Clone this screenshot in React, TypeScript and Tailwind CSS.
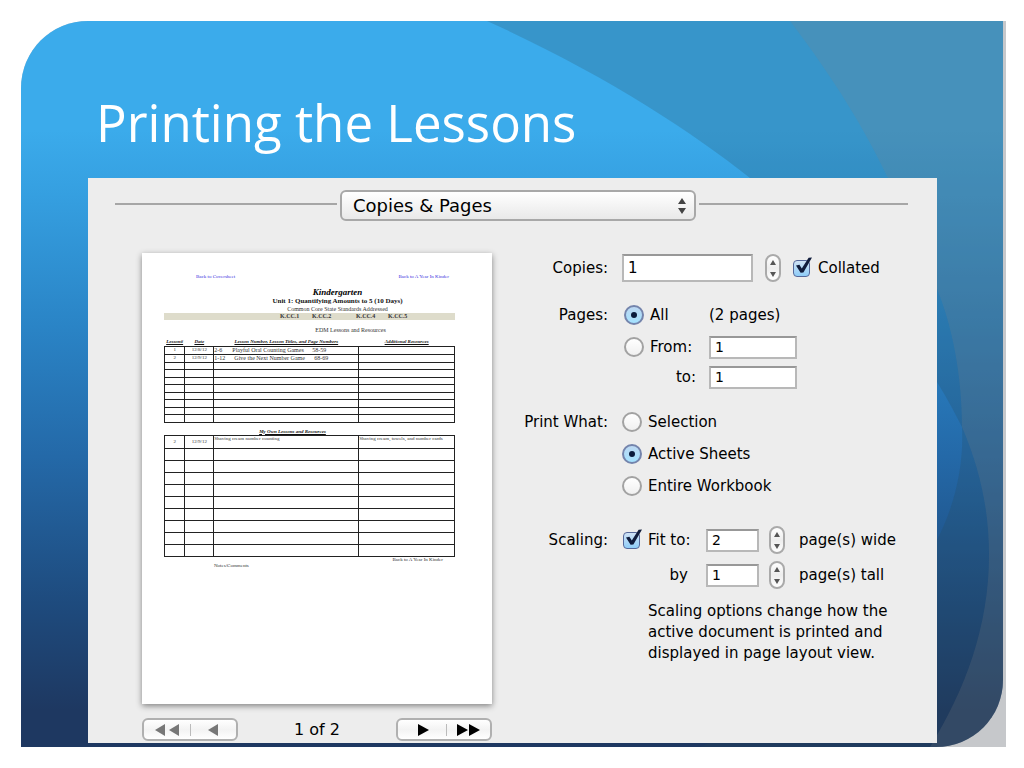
import { useId, useState } from "react";
import type { ReactNode } from "react";

function Backdrop() {
  return (
    <svg
      className="absolute inset-0 h-full w-full"
      viewBox="21 21 982 726"
      preserveAspectRatio="none"
      aria-hidden="true"
    >
      <defs>
        <linearGradient id="sky" x1="0" y1="0" x2="0" y2="1">
          <stop offset="0" stopColor="#3babeb" />
          <stop offset="0.15" stopColor="#3babeb" />
          <stop offset="0.24" stopColor="#359fe0" />
          <stop offset="0.42" stopColor="#2a84c6" />
          <stop offset="0.6" stopColor="#2469a8" />
          <stop offset="0.8" stopColor="#1e4b7e" />
          <stop offset="0.95" stopColor="#1e3861" />
          <stop offset="1" stopColor="#1e3861" />
        </linearGradient>
      </defs>
      <rect x="21" y="21" width="982" height="726" fill="url(#sky)" />
      <path
        d="M487 21 C600 72 690 130 750 178 C850 258 925 350 962 427 C964 465 955 505 937 540 C890 630 800 700 700 747 L1003 747 L1003 21 Z"
        fill="#2a4a58"
        fillOpacity="0.22"
      />
      <path
        d="M790 21 C835 80 865 130 888 178 C910 215 925 250 937 289 C952 325 962 375 962 427 C980 469 989 510 989 555 C989 627 965 690 930 747 L1003 747 L1003 21 Z"
        fill="#808080"
        fillOpacity="0.2"
      />
    </svg>
  );
}

function Stepper({ label, onStep }: { label: string; onStep: (by: number) => void }) {
  return (
    <span className="flex h-7 w-4 shrink-0 flex-col overflow-hidden rounded-full border-2 border-[#aaaaaa] bg-gradient-to-b from-white via-[#ededed] to-white">
      <button
        type="button"
        aria-label={`Increase ${label}`}
        onClick={() => onStep(1)}
        className="flex flex-1 items-center justify-center"
      >
        <svg width="6" height="5" viewBox="0 0 6 5" aria-hidden="true">
          <path d="M3 0 L6 5 H0 Z" fill="#555" />
        </svg>
      </button>
      <button
        type="button"
        aria-label={`Decrease ${label}`}
        onClick={() => onStep(-1)}
        className="flex flex-1 items-center justify-center"
      >
        <svg width="6" height="5" viewBox="0 0 6 5" aria-hidden="true">
          <path d="M3 5 L6 0 H0 Z" fill="#555" />
        </svg>
      </button>
    </span>
  );
}

function Check({ children }: { children: ReactNode }) {
  return (
    <label className="flex shrink-0 items-center gap-2">
      <span className="relative flex h-[17px] w-[17px]">
        <input
          type="checkbox"
          defaultChecked
          className="peer h-full w-full appearance-none rounded border border-[#8a8a8a] bg-gradient-to-b from-white to-[#eeeeee] checked:border-[#56689a] checked:from-[#cfe2f5] checked:to-[#8fcdf8]"
        />
        <svg
          className="pointer-events-none absolute -top-1 left-0 hidden h-5 w-5 peer-checked:block"
          viewBox="0 0 20 20"
          aria-hidden="true"
        >
          <path d="M3 9.6 L6.4 8.8 L8.8 12.4 L15.6 1.8 L19 1.4 L10.4 16.4 L7.6 16.8 Z" fill="#101c3c" />
        </svg>
      </span>
      {children}
    </label>
  );
}

function Radio({ name, checked, children }: { name: string; checked?: boolean; children: ReactNode }) {
  return (
    <label className="flex shrink-0 items-center gap-1.5">
      <span className="relative flex h-5 w-5 items-center justify-center">
        <input
          type="radio"
          name={name}
          defaultChecked={checked}
          className="peer h-full w-full appearance-none rounded-full border-2 border-[#a2a2a2] bg-gradient-to-b from-white to-[#f0f0f0] checked:border-[#7484ac] checked:from-[#bcd8f2] checked:to-[#a4e2ff]"
        />
        <span className="pointer-events-none absolute hidden h-1.5 w-1.5 rounded-full bg-[#0b1c3c] peer-checked:block" />
      </span>
      {children}
    </label>
  );
}

function NumberBox({
  id,
  label,
  value,
  onChange,
  className,
}: {
  id?: string;
  label?: string;
  value: string;
  onChange: (v: string) => void;
  className: string;
}) {
  return (
    <input
      id={id}
      aria-label={label}
      inputMode="numeric"
      value={value}
      onChange={(e) => onChange(e.target.value)}
      className={`shrink-0 border-2 border-[#b8b8b8] border-t-[#989898] bg-white px-1 outline-none ${className}`}
    />
  );
}

const step = (v: string, by: number) => String(Math.max(1, (Number(v) || 0) + by));

function Columns() {
  return (
    <colgroup>
      <col className="w-[7%]" />
      <col className="w-[10%]" />
      <col className="w-[50%]" />
      <col className="w-[33%]" />
    </colgroup>
  );
}

const cell = "border border-[#222] p-0 align-middle";

function PagePreview() {
  const blank = Array.from({ length: 8 });
  const blankOwn = Array.from({ length: 9 });
  return (
    <article
      aria-label="Page preview"
      className="h-[451px] bg-white pt-5 pr-[37px] pl-[22px] font-['Liberation_Serif',serif] text-[6px] leading-[8px] text-[#333] shadow-[0_2px_6px_rgba(0,0,0,0.45)]"
    >
      <div className="flex h-2 justify-between pr-1.5 pl-8 text-[5px] text-[#3a30e0]">
        <a href="#cover">Back to Coversheet</a>
        <a href="#year">Back to A Year In Kinder</a>
      </div>
      <header className="mt-1.5 pl-14 text-center">
        <h2 className="text-[9px] leading-[10px] font-bold text-black italic">Kindergarten</h2>
        <p className="h-2 text-[7px] leading-[8px] font-bold whitespace-nowrap text-[#111]">
          Unit 1: Quantifying Amounts to 5 (10 Days)
        </p>
        <p className="h-2">Common Core State Standards Addressed</p>
      </header>
      <ul className="flex h-[7px] bg-[#dedccb] pl-[116px] leading-[7px] font-bold">
        <li className="w-8">K.CC.1</li>
        <li className="w-11">K.CC.2</li>
        <li className="w-8">K.CC.4</li>
        <li>K.CC.5</li>
      </ul>
      <p className="mt-1.5 h-2 pl-[82px] text-center">EDM Lessons and Resources</p>

      <table className="mt-[5px] w-full table-fixed border-collapse leading-[6px]">
        <Columns />
        <thead>
          <tr className="h-[7px] text-[5px] whitespace-nowrap text-[#111] italic underline">
            <th className="p-0">Lesson#</th>
            <th className="p-0">Date</th>
            <th className="p-0">Lesson Number, Lesson Titles, and Page Numbers</th>
            <th className="p-0">Additional Resources</th>
          </tr>
        </thead>
        <tbody>
          <tr className="h-2">
            <td className={`${cell} text-center text-[5px]`}>1</td>
            <td className={`${cell} text-center text-[5px]`}>12/8/12</td>
            <td className={cell}>
              <span className="flex">
                <span className="w-[18px]">2-6</span>
                <span className="w-20">Playful Oral Counting Games</span>
                <span>58-59</span>
              </span>
            </td>
            <td className={cell} />
          </tr>
          <tr className="h-2">
            <td className={`${cell} text-center text-[5px]`}>2</td>
            <td className={`${cell} text-center text-[5px]`}>12/9/12</td>
            <td className={cell}>
              <span className="flex">
                <span className="w-5">1-12</span>
                <span className="w-20">Give the Next Number Game</span>
                <span>68-69</span>
              </span>
            </td>
            <td className={cell} />
          </tr>
          {blank.map((_, i) => (
            <tr key={i} className="h-[7px] even:h-2">
              <td className={cell} />
              <td className={cell} />
              <td className={cell} />
              <td className={cell} />
            </tr>
          ))}
        </tbody>
      </table>

      <table className="mt-[5px] w-full table-fixed border-collapse text-[5px] leading-[6px]">
        <caption className="h-[7px] pr-[34px] text-[5px] leading-[7px] font-bold text-[#111] italic underline">
          My Own Lessons and Resources
        </caption>
        <Columns />
        <tbody>
          <tr className="h-[13px]">
            <td className={`${cell} text-center`}>2</td>
            <td className={`${cell} text-center`}>12/9/12</td>
            <td className="border border-[#222] p-0 align-top">Shaving cream number counting</td>
            <td className="border border-[#222] p-0 align-top">Shaving cream, towels, and number cards</td>
          </tr>
          {blankOwn.map((_, i) => (
            <tr key={i} className="h-3">
              <td className={cell} />
              <td className={cell} />
              <td className={cell} />
              <td className={cell} />
            </tr>
          ))}
        </tbody>
      </table>
      <footer className="text-[5px] leading-[6px]">
        <p className="pr-3 text-right">Back to A Year In Kinder</p>
        <p className="pl-[50px]">Notes/Comments</p>
      </footer>
    </article>
  );
}

const pagerGroup =
  "flex h-[23px] w-24 items-center rounded-md border-2 border-[#b0b0b0] bg-gradient-to-b from-white via-[#f3f3f3] to-white";

function Pager({ page, onPage }: { page: number; onPage: (p: number) => void }) {
  return (
    <nav aria-label="Preview pages" className="mt-3.5 flex items-center justify-between text-base leading-[22px]">
      <span className={pagerGroup}>
        <button type="button" aria-label="First page" onClick={() => onPage(1)} className="flex flex-1 justify-center">
          <svg width="24" height="12" viewBox="0 0 24 12" fill="#777" aria-hidden="true">
            <path d="M10 0 V12 L0 6 Z M24 0 V12 L14 6 Z" />
          </svg>
        </button>
        <span className="h-3 w-px bg-[#bbb]" />
        <button type="button" aria-label="Previous page" onClick={() => onPage(1)} className="flex flex-1 justify-center">
          <svg width="10" height="12" viewBox="0 0 10 12" fill="#777" aria-hidden="true">
            <path d="M10 0 V12 L0 6 Z" />
          </svg>
        </button>
      </span>
      <span>{page} of 2</span>
      <span className={pagerGroup}>
        <button type="button" aria-label="Next page" onClick={() => onPage(2)} className="flex flex-1 justify-center pl-1">
          <svg width="11" height="12" viewBox="0 0 11 12" aria-hidden="true">
            <path d="M0 0 V12 L11 6 Z" />
          </svg>
        </button>
        <span className="h-3 w-px bg-[#bbb]" />
        <button type="button" aria-label="Last page" onClick={() => onPage(2)} className="flex flex-1 justify-center">
          <svg width="24" height="12" viewBox="0 0 24 12" aria-hidden="true">
            <path d="M1 0 V12 L12 6 Z M13 0 V12 L24 6 Z" />
          </svg>
        </button>
      </span>
    </nav>
  );
}

const rowLabel = "w-[88px] shrink-0 text-right whitespace-nowrap";

function Settings() {
  const id = useId();
  const [copies, setCopies] = useState("1");
  const [from, setFrom] = useState("1");
  const [to, setTo] = useState("1");
  const [wide, setWide] = useState("2");
  const [tall, setTall] = useState("1");
  return (
    <form className="min-w-0 flex-1 text-[15px] leading-[21px] text-black">
      <div className="flex h-[30px] items-center">
        <label htmlFor={`${id}copies`} className={rowLabel}>
          Copies:
        </label>
        <NumberBox id={`${id}copies`} value={copies} onChange={setCopies} className="ml-3.5 h-7 w-[131px]" />
        <span className="mr-3 ml-3 flex">
          <Stepper label="copies" onStep={(by) => setCopies(step(copies, by))} />
        </span>
        <Check>Collated</Check>
      </div>

      <fieldset className="mt-4">
        <div className="flex h-8 items-center">
          <span className={rowLabel}>Pages:</span>
          <span className="ml-4 w-[85px]">
            <Radio name="range" checked>
              All
            </Radio>
          </span>
          <span>(2 pages)</span>
        </div>
        <div className="flex h-8 items-center">
          <span className="ml-[104px] w-[85px]">
            <Radio name="range">From:</Radio>
          </span>
          <NumberBox label="From page" value={from} onChange={setFrom} className="h-[23px] w-[88px] text-sm" />
        </div>
        <div className="flex h-7 items-center">
          <label htmlFor={`${id}to`} className="w-[176px] text-right">
            to:
          </label>
          <NumberBox id={`${id}to`} value={to} onChange={setTo} className="ml-[13px] h-[23px] w-[88px] text-sm" />
        </div>
      </fieldset>

      <fieldset className="mt-[15px] flex">
        <span className={`${rowLabel} leading-8`}>Print What:</span>
        <div className="ml-3.5 flex flex-col">
          <span className="flex h-8 items-center">
            <Radio name="what">Selection</Radio>
          </span>
          <span className="flex h-8 items-center">
            <Radio name="what" checked>
              Active Sheets
            </Radio>
          </span>
          <span className="flex h-8 items-center">
            <Radio name="what">Entire Workbook</Radio>
          </span>
        </div>
      </fieldset>

      <fieldset className="mt-5">
        <div className="flex h-9 items-center">
          <span className={rowLabel}>Scaling:</span>
          <span className="ml-[15px] w-[83px]">
            <Check>Fit to:</Check>
          </span>
          <NumberBox label="Pages wide" value={wide} onChange={setWide} className="h-[23px] w-[53px] text-sm" />
          <span className="mr-3.5 ml-2.5 flex">
            <Stepper label="pages wide" onStep={(by) => setWide(step(wide, by))} />
          </span>
          <span className="whitespace-nowrap">page(s) wide</span>
        </div>
        <div className="flex h-[34px] items-center">
          <label htmlFor={`${id}tall`} className="w-[168px] text-right">
            by
          </label>
          <NumberBox id={`${id}tall`} value={tall} onChange={setTall} className="ml-[18px] h-[23px] w-[53px] text-sm" />
          <span className="mr-3.5 ml-2.5 flex">
            <Stepper label="pages tall" onStep={(by) => setTall(step(tall, by))} />
          </span>
          <span className="whitespace-nowrap">page(s) tall</span>
        </div>
        <p className="mt-[9px] ml-32 max-w-[260px]">
          Scaling options change how the active document is printed and displayed in page layout view.
        </p>
      </fieldset>
    </form>
  );
}

export default function App() {
  const [page, setPage] = useState(1);
  return (
    <main className="flex min-h-screen bg-white py-[21px] pr-[18px] pl-[21px] font-['DejaVu_Sans',sans-serif] text-black">
      <div className="flex flex-1 rounded-tl-[67px] bg-[#c6c8cb] pr-[3px]">
        <section className="relative flex flex-1 flex-col overflow-hidden rounded-tl-[67px] rounded-br-[67px] pr-[66px] pb-1 pl-[67px]">
          <Backdrop />
          <h1 className="relative pt-[66px] pb-[21px] pl-2 font-['Open_Sans',sans-serif] text-[51px] leading-[70px] font-medium text-white">
            Printing the Lessons
          </h1>
          <div className="relative flex-1 bg-[#ededed]">
            <div className="flex items-center gap-[3px] pt-3 pr-[29px] pl-[27px]">
              <span className="mb-[3px] h-0.5 w-[222px] bg-[#a6a6a6]" />
              <span className="relative flex w-[356px]">
                <select
                  aria-label="Print section"
                  className="h-[31px] w-full appearance-none rounded-md border-2 border-[#a8a8a8] bg-gradient-to-b from-white to-[#e9e9e9] px-[11px] text-lg leading-6 text-black outline-none"
                >
                  <option>Copies &amp; Pages</option>
                </select>
                <svg
                  className="pointer-events-none absolute top-2 right-2.5"
                  width="8"
                  height="16"
                  viewBox="0 0 8 16"
                  fill="#444"
                  aria-hidden="true"
                >
                  <path d="M4 0 L8 6 H0 Z M4 16 L0 10 H8 Z" />
                </svg>
              </span>
              <span className="mb-[3px] h-0.5 flex-1 bg-[#a6a6a6]" />
            </div>
            <div className="mt-8 flex pl-[54px]">
              <div className="w-[350px] shrink-0">
                <PagePreview />
                <Pager page={page} onPage={setPage} />
              </div>
              <div className="ml-7 flex flex-1">
                <Settings />
              </div>
            </div>
          </div>
        </section>
      </div>
    </main>
  );
}
